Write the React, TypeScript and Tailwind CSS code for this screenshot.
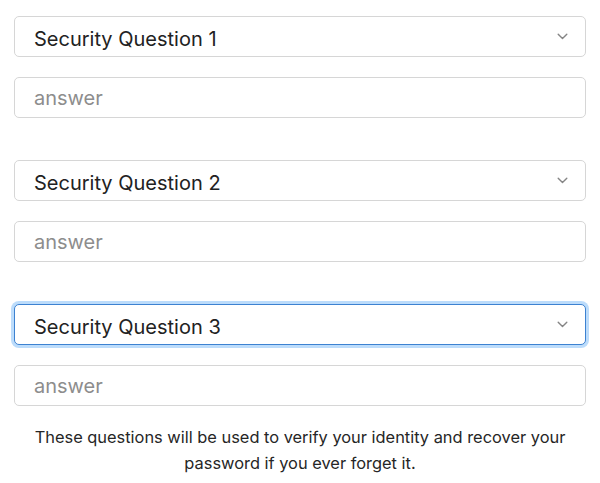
import React from "react";

function Chevron() {
  return (
    <svg width="11" height="7" viewBox="0 0 11 7" fill="none" className="shrink-0">
      <path d="M1.2 1.2 L5.5 5.5 L9.8 1.2" stroke="#858585" strokeWidth="1.4" strokeLinecap="round" strokeLinejoin="round" />
    </svg>
  );
}

function Group({ n, focused }: { n: number; focused?: boolean }) {
  return (
    <div className="flex flex-col gap-[20px]">
      <div
        className={
          "h-[41px] rounded-[5px] bg-white flex items-center justify-between pl-[19px] pr-[17px] " +
          (focused
            ? "border border-[#3d82d1] shadow-[0_0_0_3px_#bcdcfb]"
            : "border border-[#d6d6d6]")
        }
      >
        <span className="text-[20px] text-[#222] pt-[4px]">Security Question {n}</span>
        <Chevron />
      </div>
      <div className="h-[41px] rounded-[5px] bg-white border border-[#d6d6d6] flex items-center pl-[19px]">
        <span className="text-[20px] text-[#8d8d8d]">answer</span>
      </div>
    </div>
  );
}

export default function App() {
  return (
    <div
      className="w-[600px] h-[483px] bg-white px-[14px] pt-[16px] flex flex-col"
      style={{ fontFamily: "Inter, 'Noto Sans', sans-serif" }}
    >
      <div className="flex flex-col gap-[42px]">
        <Group n={1} />
        <Group n={2} />
        <Group n={3} focused />
      </div>
      <p className="mt-[18px] text-center text-[16.4px] leading-[26px] text-[#262626] px-[6px]">
        These questions will be used to verify your identity and recover your password if you ever forget it.
      </p>
    </div>
  );
}
